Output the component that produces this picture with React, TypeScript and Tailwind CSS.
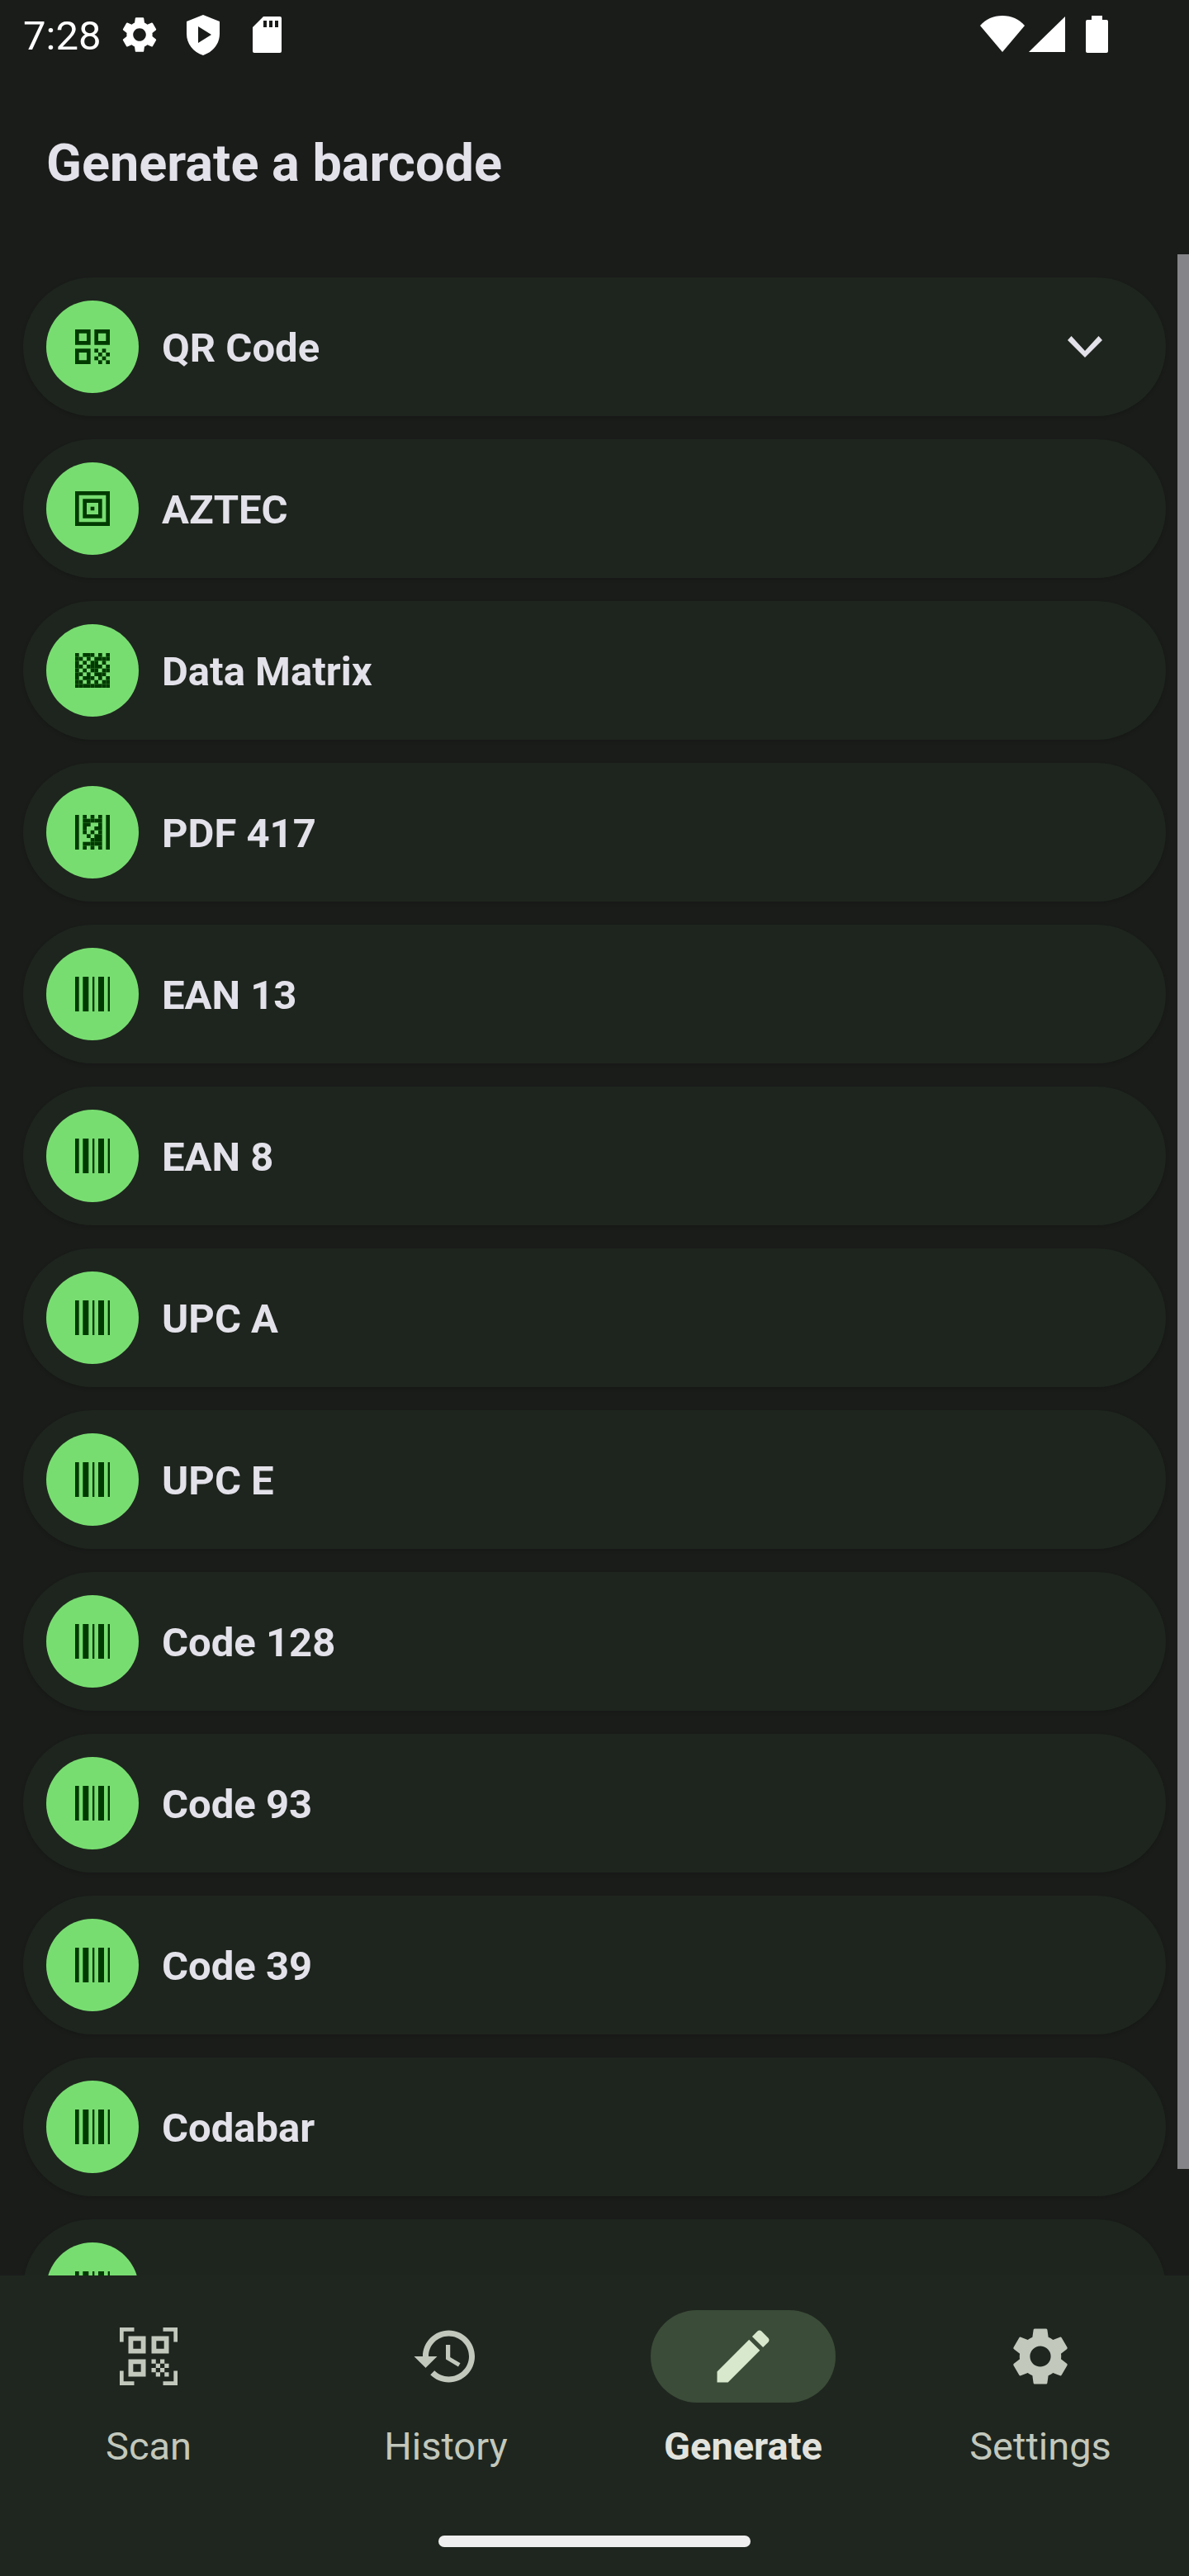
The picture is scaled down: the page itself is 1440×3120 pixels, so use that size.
import React from 'react';

const GEAR =
  'M19.14 12.94c.04-.3.06-.61.06-.94 0-.32-.02-.64-.07-.94l2.03-1.58c.18-.14.23-.41.12-.61l-1.92-3.32c-.12-.22-.37-.29-.59-.22l-2.39.96c-.5-.38-1.03-.7-1.62-.94l-.36-2.54c-.04-.24-.24-.41-.48-.41h-3.84c-.24 0-.43.17-.47.41l-.36 2.54c-.59.24-1.13.57-1.62.94l-2.39-.96c-.22-.08-.47 0-.59.22L2.74 8.87c-.12.21-.08.47.12.61l2.03 1.58c-.05.3-.09.63-.09.94s.02.64.07.94l-2.03 1.58c-.18.14-.23.41-.12.61l1.92 3.32c.12.22.37.29.59.22l2.39-.96c.5.38 1.03.7 1.62.94l.36 2.54c.05.24.24.41.48.41h3.84c.24 0 .44-.17.47-.41l.36-2.54c.59-.24 1.13-.56 1.62-.94l2.39.96c.22.08.47 0 .59-.22l1.92-3.32c.12-.22.07-.47-.12-.61l-2.01-1.58zM12 15.6c-1.98 0-3.6-1.62-3.6-3.6s1.62-3.6 3.6-3.6 3.6 1.62 3.6 3.6-1.62 3.6-3.6 3.6z';

// turns rows of 0/1 into rects, one unit per cell
function Cells({ rows, x = 0, y = 0, size = 1 }: { rows: string[]; x?: number; y?: number; size?: number }) {
  return (
    <>
      {rows.map((row, r) =>
        row.split('').map((c, i) =>
          c === '1' ? <rect key={`${r}-${i}`} x={x + i * size} y={y + r * size} width={size} height={size} /> : null
        )
      )}
    </>
  );
}

function QrIcon() {
  return (
    <svg viewBox="0 0 18 18" className="w-[42px] h-[42px]" fill="#013a01">
      <path fillRule="evenodd" d="M0 0h8v8H0zM2 2v4h4V2zM10 0h8v8h-8zM12 2v4h4V2zM0 10h8v8H0zM2 12v4h4v-4z" />
      <Cells x={10} y={10} size={2} rows={['1010', '0101', '1010', '0101']} />
    </svg>
  );
}

function AztecIcon() {
  return (
    <svg viewBox="0 0 18 18" className="w-[42px] h-[42px]" fill="#013a01">
      <path fillRule="evenodd" d="M0 0h18v18H0zM2 2v14h14V2zM4 4h10v10H4zM6 6v6h6V6zM8 8h2v2H8z" />
    </svg>
  );
}

function MatrixIcon() {
  return (
    <svg viewBox="0 0 9 9" className="w-[42px] h-[42px]" fill="#013a01">
      <Cells
        rows={[
          '101110101',
          '110101111',
          '101011010',
          '110111101',
          '101011011',
          '110101110',
          '101110101',
          '110101011',
          '111111111',
        ]}
      />
    </svg>
  );
}

function PdfIcon() {
  return (
    <svg viewBox="0 0 9 9" className="w-[42px] h-[42px]" fill="#013a01">
      <rect x="0" y="0" width="1" height="9" />
      <rect x="8" y="0" width="1" height="9" />
      <Cells
        x={2}
        rows={['10101', '11111', '11001', '10011', '10101', '01011', '00111', '11111', '10101']}
      />
    </svg>
  );
}

function BarsIcon() {
  return (
    <svg viewBox="0 0 18 18" className="w-[42px] h-[42px]" fill="#013a01">
      <rect x="0" width="2" height="18" />
      <rect x="4" width="3" height="18" />
      <rect x="9" width="1" height="18" />
      <rect x="12" width="3" height="18" />
      <rect x="17" width="1" height="18" />
    </svg>
  );
}

function ScanIcon() {
  return (
    <svg viewBox="0 0 30 30" className="w-[70px] h-[70px]" fill="#c2c8bc">
      <path d="M0 0h7.5v2H2v5.5H0zM22.5 0H30v7.5h-2V2h-5.5zM0 22.5h2V28h5.5v2H0zM28 22.5h2V30h-7.5v-2H28z" />
      <path
        fillRule="evenodd"
        d="M4.5 4.5h9v9h-9zM7 7v4h4V7zM16.5 4.5h9v9h-9zM19 7v4h4V7zM4.5 16.5h9v9h-9zM7 19v4h4v-4z"
      />
      <Cells x={16.5} y={16.5} size={2.25} rows={['1010', '0101', '1010', '0101']} />
    </svg>
  );
}

function StatusBar() {
  return (
    <div className="h-[84px] shrink-0 flex items-start text-white">
      <span className="ml-[28px] mt-[15px] w-[95px] text-[49px] leading-[57px]">7:28</span>
      <svg viewBox="0 0 24 24" className="ml-[20px] mt-[16px] w-[52px] h-[52px]" fill="#fff">
        <path d={GEAR} />
      </svg>
      <svg viewBox="0 0 40 49" className="ml-[31px] mt-[18px] w-[40px] h-[49px]" fill="#fff">
        <path
          fillRule="evenodd"
          d="M20 0 40 8v15c0 12-8 22-20 26C8 45 0 35 0 23V8zM14 14v20l16-10z"
        />
      </svg>
      <svg viewBox="0 0 35 44" className="ml-[40px] mt-[20px] w-[35px] h-[44px]" fill="#fff">
        <path
          fillRule="evenodd"
          d="M13 0h20a2 2 0 0 1 2 2v40a2 2 0 0 1-2 2H2a2 2 0 0 1-2-2V13zM13 5v8h4V5zM20 5v8h4V5zM27 5v8h4V5z"
        />
      </svg>
      <div className="ml-auto mr-[98px] mt-[19px] flex items-start">
        <svg viewBox="0 0 54 44" className="w-[54px] h-[44px]" fill="#fff">
          <path d="M27 44 0 12C7 4 16 0 27 0s20 4 27 12z" />
        </svg>
        <svg viewBox="0 0 44 43" className="ml-[5px] mt-[1px] w-[44px] h-[43px]" fill="#fff">
          <path d="M44 0v43H0z" />
        </svg>
        <svg viewBox="0 0 27 45" className="ml-[25px] w-[27px] h-[45px]" fill="#fff">
          <path d="M7 0h13v5h5a2 2 0 0 1 2 2v36a2 2 0 0 1-2 2H2a2 2 0 0 1-2-2V7a2 2 0 0 1 2-2h5z" />
        </svg>
      </div>
    </div>
  );
}

// the last row is cut by the nav bar before its label shows
const barcodes: { name: string; icon: React.ReactNode; chevron?: boolean }[] = [
  { name: 'QR Code', icon: <QrIcon />, chevron: true },
  { name: 'AZTEC', icon: <AztecIcon /> },
  { name: 'Data Matrix', icon: <MatrixIcon /> },
  { name: 'PDF 417', icon: <PdfIcon /> },
  { name: 'EAN 13', icon: <BarsIcon /> },
  { name: 'EAN 8', icon: <BarsIcon /> },
  { name: 'UPC A', icon: <BarsIcon /> },
  { name: 'UPC E', icon: <BarsIcon /> },
  { name: 'Code 128', icon: <BarsIcon /> },
  { name: 'Code 93', icon: <BarsIcon /> },
  { name: 'Code 39', icon: <BarsIcon /> },
  { name: 'Codabar', icon: <BarsIcon /> },
  { name: '', icon: <BarsIcon /> },
];

function BarcodeRow({ name, icon, chevron }: { name: string; icon: React.ReactNode; chevron?: boolean }) {
  return (
    <div className="h-[168px] shrink-0 rounded-[84px] bg-[#1e251e] flex items-center pl-[28px] pr-[77px] shadow-[0_2px_4px_rgba(0,0,0,0.15)]">
      <div className="w-[112px] h-[112px] rounded-full bg-[#78dd71] flex items-center justify-center">{icon}</div>
      <span className="ml-[28px] mt-[3px] text-[49px] leading-[58px] font-bold text-[#e3e1e9]">{name}</span>
      {chevron && (
        <svg viewBox="0 0 42 26" className="ml-auto w-[42px] h-[26px]" fill="#e3e1e9">
          <path d="M4.5 0 21 18 37.5 0 42 5 21 26 0 5z" />
        </svg>
      )}
    </div>
  );
}

function BottomNav() {
  const label = 'mt-[25px] text-[47px] leading-[55px] text-[#c2c8bc]';
  return (
    <div className="h-[364px] shrink-0 bg-[#1f261f] flex flex-col relative z-10">
      <div className="grid grid-cols-4 pt-[42px]">
        <div className="flex flex-col items-center">
          <div className="h-[112px] flex items-center justify-center">
            <ScanIcon />
          </div>
          <span className={label}>Scan</span>
        </div>
        <div className="flex flex-col items-center">
          <div className="h-[112px] flex items-center justify-center">
            <svg viewBox="0 0 24 24" className="w-[84px] h-[84px]" fill="#c2c8bc">
              <path d="M13 3c-4.97 0-9 4.03-9 9H1l3.89 3.89.07.14L9 12H6c0-3.87 3.13-7 7-7s7 3.13 7 7-3.13 7-7 7c-1.93 0-3.68-.79-4.94-2.06l-1.42 1.42C8.27 19.99 10.51 21 13 21c4.97 0 9-4.03 9-9s-4.03-9-9-9zm-1 5v5l4.28 2.54.72-1.21-3.5-2.08V8H12z" />
            </svg>
          </div>
          <span className={label}>History</span>
        </div>
        <div className="flex flex-col items-center">
          <div className="w-[224px] h-[112px] rounded-full bg-[#3b4c38] flex items-center justify-center">
            <svg viewBox="0 0 24 24" className="w-[84px] h-[84px]" fill="#d7e8cd">
              <path d="M3 17.25V21h3.75L17.81 9.94l-3.75-3.75L3 17.25zM20.71 7.04c.39-.39.39-1.02 0-1.41l-2.34-2.34c-.39-.39-1.02-.39-1.41 0l-1.83 1.83 3.75 3.75 1.83-1.83z" />
            </svg>
          </div>
          <span className="mt-[25px] text-[47px] leading-[55px] font-bold text-[#e2e3dd]">Generate</span>
        </div>
        <div className="flex flex-col items-center">
          <div className="h-[112px] flex items-center justify-center">
            <svg viewBox="0 0 24 24" className="w-[84px] h-[84px]" fill="#c2c8bc">
              <path d={GEAR} />
            </svg>
          </div>
          <span className={label}>Settings</span>
        </div>
      </div>
      <div className="mt-auto pb-[35px] flex justify-center">
        <div className="w-[378px] h-[14px] rounded-full bg-[#efefef]" />
      </div>
    </div>
  );
}

export default function App() {
  return (
    <div className="w-[1440px] h-[3120px] bg-[#1a1c1a] flex flex-col overflow-hidden relative font-['Roboto',sans-serif]">
      <StatusBar />
      <div className="flex-1 min-h-0 overflow-hidden">
        <div className="h-[252px] pt-[79px] pl-[56px]">
          <h1 className="text-[63px] leading-[70px] font-bold text-[#e3e1e9]">Generate a barcode</h1>
        </div>
        <div className="flex flex-col gap-[28px] px-[28px]">
          {barcodes.map((b) => (
            <BarcodeRow key={b.name} {...b} />
          ))}
        </div>
      </div>
      <BottomNav />
      {/* scroll thumb sits over the list */}
      <div className="absolute right-0 top-[308px] w-[14px] h-[2319px] bg-[#858488]" />
    </div>
  );
}
